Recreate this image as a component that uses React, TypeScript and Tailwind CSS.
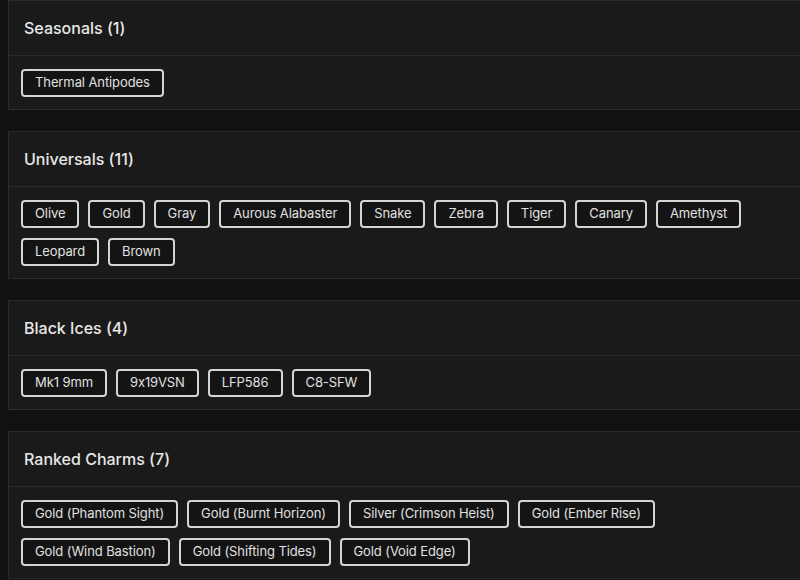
import React from 'react';

const groups: { title: string; items: string[] }[] = [
  { title: 'Seasonals', items: ['Thermal Antipodes'] },
  {
    title: 'Universals',
    items: ['Olive', 'Gold', 'Gray', 'Aurous Alabaster', 'Snake', 'Zebra', 'Tiger', 'Canary', 'Amethyst', 'Leopard', 'Brown'],
  },
  { title: 'Black Ices', items: ['Mk1 9mm', '9x19VSN', 'LFP586', 'C8-SFW'] },
  {
    title: 'Ranked Charms',
    items: [
      'Gold (Phantom Sight)',
      'Gold (Burnt Horizon)',
      'Silver (Crimson Heist)',
      'Gold (Ember Rise)',
      'Gold (Wind Bastion)',
      'Gold (Shifting Tides)',
      'Gold (Void Edge)',
    ],
  },
];

const Section: React.FC<{ title: string; items: string[] }> = ({ title, items }) => (
  <div className="bg-[#1a1a1a] border border-[#2b2b2b]">
    {/* Header */}
    <div className="h-[55px] px-[15px] flex items-center border-b border-[#2b2b2b]">
      <h2 className="text-[16px] font-medium text-[#e8e8e8]">
        {title} ({items.length})
      </h2>
    </div>
    {/* Chips */}
    <div className="px-3 pt-[13px] pb-3 flex flex-wrap gap-x-[9px] gap-y-[10px]">
      {items.map((item) => (
        <span
          key={item}
          className="h-[28px] px-3 flex items-center border-2 border-[#d4d4d4] rounded-[4px] bg-[#141414] text-[13px] tracking-[-0.1px] text-[#e0e0e0]"
        >
          {item}
        </span>
      ))}
    </div>
  </div>
);

export default function App() {
  return (
    <div
      className="w-full h-[580px] overflow-hidden bg-[#111111] [font-feature-settings:'calt'_0]"
      style={{ fontFamily: 'Inter, "Noto Sans", sans-serif' }}
    >
      <div className="w-[810px] pl-2 flex flex-col gap-[21px]">
        {groups.map((g) => (
          <Section key={g.title} title={g.title} items={g.items} />
        ))}
      </div>
    </div>
  );
}
